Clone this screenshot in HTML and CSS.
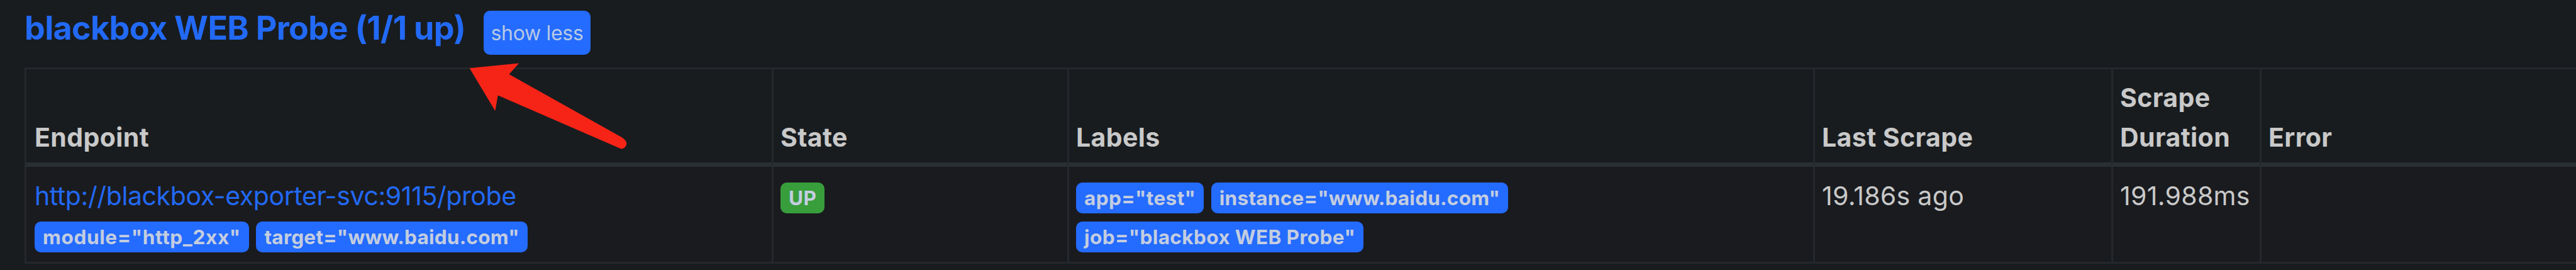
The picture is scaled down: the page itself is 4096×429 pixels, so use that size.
FILE: index.html
```
<!DOCTYPE html>
<html lang="en">
<head>
    <meta charset="UTF-8">
    <title>Targets</title>
    <link rel="stylesheet" href="styles.css">
</head>
<body>
    <div class="pool-header">
        <h3 class="pool-title"><a href="#">blackbox WEB Probe (1/1 up)</a></h3>
        <button class="btn">show less</button>
    </div>
    <table class="targets">
        <thead>
            <tr>
                <th class="endpoint">Endpoint</th>
                <th class="state">State</th>
                <th class="labels">Labels</th>
                <th class="last-scrape">Last Scrape</th>
                <th class="duration">Scrape Duration</th>
                <th class="error">Error</th>
            </tr>
        </thead>
        <tbody>
            <tr>
                <td>
                    <a class="endpoint-link" href="#">http://blackbox-exporter-svc:9115/probe</a><br>
                    <span class="badge badge-module">module="http_2xx"</span>
                    <span class="badge badge-host">target="www.baidu.com"</span>
                </td>
                <td><span class="badge badge-up">UP</span></td>
                <td>
                    <span class="badge">app="test"</span>
                    <span class="badge badge-host">instance="www.baidu.com"</span><br>
                    <span class="badge">job="blackbox WEB Probe"</span>
                </td>
                <td class="time">19.186s ago</td>
                <td class="time">191.988ms</td>
                <td></td>
            </tr>
        </tbody>
    </table>
    <svg class="arrow" viewBox="933 125 313 173">
        <path d="M933 135.500L1031.500 125.500L1011.700 147.500L1236 273Q1246 279 1246 286Q1244 296 1235 296L989.500 189.500L984 220.500Z" fill="#f62417"/>
    </svg>
</body>
</html>
```
FILE: styles.css
```
* {
    box-sizing: border-box;
}
body {
    margin: 0;
    height: 429px;
    overflow: hidden;
    position: relative;
    background: #181c1f;
    color: #c9c9c9;
    font-family: Inter, "Liberation Sans", sans-serif;
    font-size: 41px;
    line-height: 62.4px;
}
a {
    color: #2269f5;
    text-decoration: none;
}
.pool-header {
    display: flex;
    align-items: flex-start;
    height: 107px;
    padding: 14px 0 0 39px;
}
.pool-title {
    width: 730px;
    margin: 0;
    font-size: 52px;
    font-weight: 700;
    letter-spacing: -0.65px;
    white-space: nowrap;
}
.btn {
    width: 170px;
    height: 70px;
    margin-top: 3px;
    padding: 0;
    border: none;
    border-radius: 10px;
    background: #246bff;
    color: #b7c9e4;
    font-family: inherit;
    font-size: 32px;
    letter-spacing: -0.3px;
}
.targets {
    width: 4200px;
    margin-left: 39px;
    table-layout: fixed;
    border-spacing: 0;
    border-top: 3px solid #24282c;
}
th,
td {
    padding: 13px 11px;
    border-left: 3px solid #24282c;
    text-align: left;
}
th:first-child,
td:first-child {
    padding-left: 13px;
}
th {
    height: 155px;
    padding-bottom: 9px;
    border-bottom: 7px solid #2a2f33;
    font-weight: 700;
    letter-spacing: 0.4px;
    vertical-align: bottom;
}
td {
    height: 154px;
    padding-top: 14.5px;
    padding-bottom: 10px;
    border-bottom: 3px solid #24282c;
    background: #1a1b1f;
    vertical-align: top;
}
.endpoint {
    width: 1188px;
}
.state {
    width: 470px;
}
.labels {
    width: 1186px;
}
.last-scrape {
    width: 474px;
}
.duration {
    width: 236px;
}
.endpoint-link {
    letter-spacing: -0.4px;
}
.time {
    letter-spacing: 0.3px;
}
.badge {
    display: inline-block;
    height: 49px;
    padding: 0 13px;
    border-radius: 10px;
    background: #246bff;
    color: #c3cde0;
    font-size: 31.6px;
    font-weight: 700;
    letter-spacing: 0.35px;
    line-height: 49px;
    white-space: nowrap;
}
.badge-module {
    letter-spacing: 0.6px;
}
.badge-host {
    letter-spacing: 0.2px;
}
.badge-up {
    background: #389e3b;
}
.arrow {
    position: absolute;
    left: 746px;
    top: 100px;
    width: 251px;
    height: 138px;
}
```
